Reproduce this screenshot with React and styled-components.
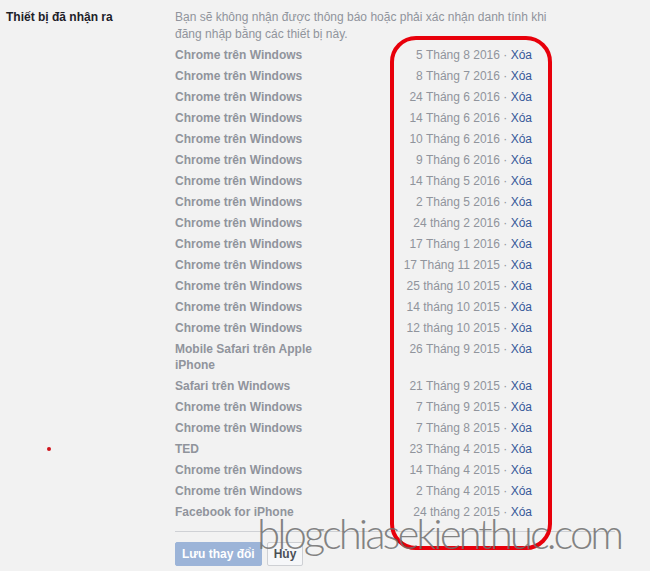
import React from "react";
import styled, { createGlobalStyle } from "styled-components";

const GlobalStyle = createGlobalStyle`
  body {
    margin: 0;
    background: #f2f2f2;
    font-family: "Liberation Sans", Arial, sans-serif;
    font-size: 12px;
  }
`;

const Page = styled.div`
  position: relative;
  width: 650px;
  height: 571px;
  overflow: hidden;
  background: #f2f2f2;
`;

const Section = styled.div`
  display: grid;
  grid-template-columns: 175px 1fr;
  padding-top: 9px;
`;

const Label = styled.div`
  padding-left: 6px;
  font-weight: bold;
  color: #1d2129;
  line-height: 16px;
`;

const Content = styled.div`
  width: 385px;
`;

const Description = styled.p`
  margin: 0 0 4px;
  color: #90949c;
  line-height: 17px;
`;

const DeviceList = styled.ul`
  list-style: none;
  margin: 0;
  padding: 0;
  width: 357px;
`;

const DeviceRow = styled.li`
  display: flex;
  align-items: flex-start;
  padding-bottom: 5px;
  line-height: 16px;
`;

const DeviceName = styled.span`
  width: 150px;
  font-weight: bold;
  color: #90949c;
`;

const DeviceDate = styled.span`
  flex: 1;
  text-align: right;
  color: #90949c;
`;

const RemoveLink = styled.a`
  color: #365899;
  text-decoration: none;
  cursor: pointer;
`;

const Divider = styled.div`
  margin-top: 6px;
  width: 440px;
  border-top: 1px solid #cfd1d5;
`;

const Actions = styled.div`
  display: flex;
  gap: 5px;
  margin-top: 10px;
`;

const Button = styled.button`
  height: 24px;
  padding: 0 6px;
  border-radius: 2px;
  font-family: "Liberation Sans", Arial, sans-serif;
  font-size: 12px;
  font-weight: bold;
  border: 1px solid ${(p) => (p.$primary ? "#9cb4d8" : "#ced0d4")};
  background: ${(p) => (p.$primary ? "#9cb4d8" : "#f6f7f9")};
  color: ${(p) => (p.$primary ? "#fff" : "#4b4f56")};
`;

const RedFrame = styled.div`
  position: absolute;
  left: 390px;
  top: 36px;
  width: 154px;
  height: 506px;
  border: 4px solid #e8000b;
  border-radius: 26px;
  pointer-events: none;
`;

const Dot = styled.div`
  position: absolute;
  left: 47px;
  top: 447px;
  width: 4px;
  height: 4px;
  border-radius: 50%;
  background: #d0141c;
`;

const Watermark = styled.div`
  position: absolute;
  left: 257px;
  top: 508px;
  font-family: "Lato", "DejaVu Sans", sans-serif;
  font-weight: 300;
  font-size: 42px;
  letter-spacing: -3px;
  line-height: 50px;
  white-space: nowrap;
  color: rgba(110, 110, 110, 0.85);
  pointer-events: none;
`;

const devices = [
  ["Chrome trên Windows", "5 Tháng 8 2016"],
  ["Chrome trên Windows", "8 Tháng 7 2016"],
  ["Chrome trên Windows", "24 Tháng 6 2016"],
  ["Chrome trên Windows", "14 Tháng 6 2016"],
  ["Chrome trên Windows", "10 Tháng 6 2016"],
  ["Chrome trên Windows", "9 Tháng 6 2016"],
  ["Chrome trên Windows", "14 Tháng 5 2016"],
  ["Chrome trên Windows", "2 Tháng 5 2016"],
  ["Chrome trên Windows", "24 tháng 2 2016"],
  ["Chrome trên Windows", "17 Tháng 1 2016"],
  ["Chrome trên Windows", "17 Tháng 11 2015"],
  ["Chrome trên Windows", "25 tháng 10 2015"],
  ["Chrome trên Windows", "14 tháng 10 2015"],
  ["Chrome trên Windows", "12 tháng 10 2015"],
  ["Mobile Safari trên Apple iPhone", "26 Tháng 9 2015"],
  ["Safari trên Windows", "21 Tháng 9 2015"],
  ["Chrome trên Windows", "7 Tháng 9 2015"],
  ["Chrome trên Windows", "7 Tháng 8 2015"],
  ["TED", "23 Tháng 4 2015"],
  ["Chrome trên Windows", "14 Tháng 4 2015"],
  ["Chrome trên Windows", "2 Tháng 4 2015"],
  ["Facebook for iPhone", "24 tháng 2 2015"],
];

export default function App() {
  return (
    <Page>
      <GlobalStyle />
      <Section>
        <Label>Thiết bị đã nhận ra</Label>
        <Content>
          <Description>
            Bạn sẽ không nhận được thông báo hoặc phải xác nhận danh tính khi
            đăng nhập bằng các thiết bị này.
          </Description>
          <DeviceList>
            {devices.map(([name, date], i) => (
              <DeviceRow key={i}>
                <DeviceName>{name}</DeviceName>
                <DeviceDate>
                  {date} · <RemoveLink>Xóa</RemoveLink>
                </DeviceDate>
              </DeviceRow>
            ))}
          </DeviceList>
          <Divider />
          <Actions>
            <Button $primary>Lưu thay đổi</Button>
            <Button>Hủy</Button>
          </Actions>
        </Content>
      </Section>
      <RedFrame />
      <Dot />
      <Watermark>blogchiasekienthuc.com</Watermark>
    </Page>
  );
}
